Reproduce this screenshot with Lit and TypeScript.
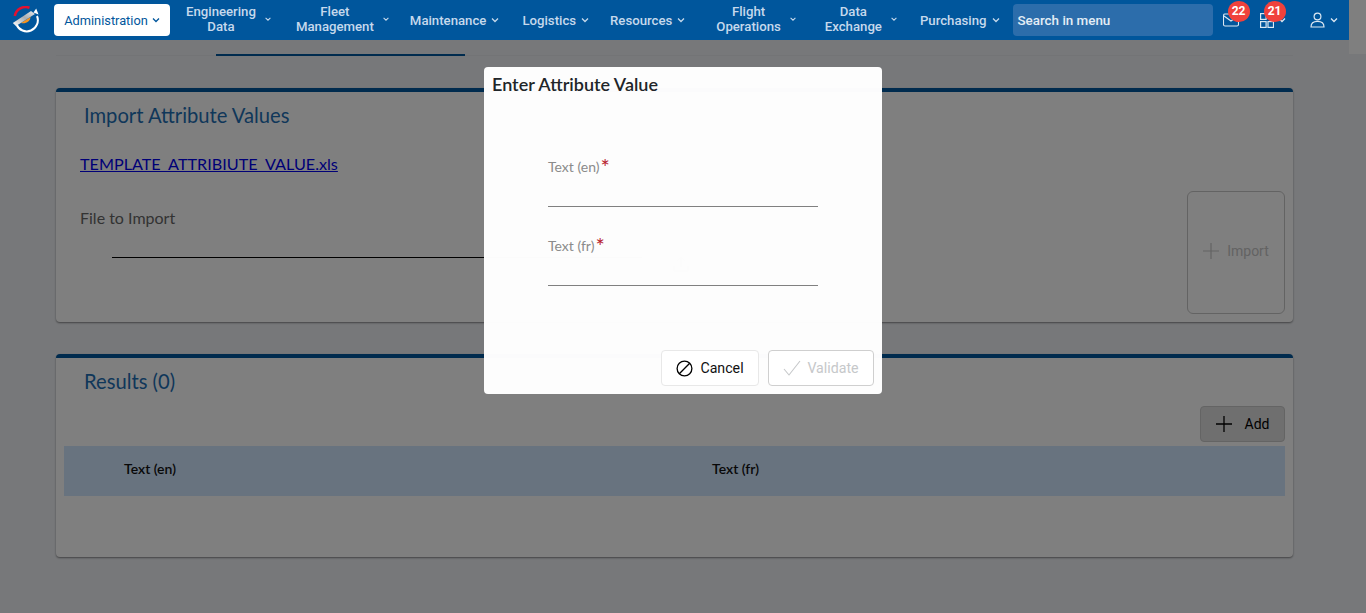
import { LitElement, html, css, svg } from "lit";
import { customElement } from "lit/decorators.js";

// gap before each nav entry comes from the original's uneven cell widths
const NAV_ITEMS = [
  { lines: ["Engineering", "Data"], gap: 16 },
  { lines: ["Fleet", "Management"], gap: 24 },
  { lines: ["Maintenance"], gap: 20 },
  { lines: ["Logistics"], gap: 23 },
  { lines: ["Resources"], gap: 21 },
  { lines: ["Flight", "Operations"], gap: 31 },
  { lines: ["Data", "Exchange"], gap: 28 },
  { lines: ["Purchasing"], gap: 22 },
];

const chevron = (cls = "chev") => html`<svg class=${cls} viewBox="0 0 8 6" width="8" height="6">
  <path d="M1 1.5 L4 4.5 L7 1.5" fill="none" stroke="currentColor" stroke-width="1.3" />
</svg>`;

const logo = svg`<svg width="28" height="28" viewBox="0 0 28 28">
  <defs>
    <linearGradient id="band" x1="0" y1="1" x2="1" y2="0">
      <stop offset="0" stop-color="#ffffff" />
      <stop offset="0.55" stop-color="#a9adb1" />
      <stop offset="1" stop-color="#e8eaec" />
    </linearGradient>
  </defs>
  <path d="M3.8 10 A11 11 0 0 1 18.5 1.8" fill="none" stroke="#e4112f" stroke-width="2.6" />
  <path d="M5.5 18.5 A11 11 0 0 0 26 10" fill="none" stroke="#ffffff" stroke-width="2" />
  <path d="M22.5 6.5 L25.2 2.5 L27.5 8.5 Z" fill="#ffffff" />
  <path d="M10 17 L19.5 11 C19.5 15 14.5 18.5 10 17 Z" fill="#f7941d" />
  <path d="M1.8 17 L20 5 L24 8 L5 20 Z" fill="url(#band)" />
</svg>`;

@customElement("app-root")
export class AppRoot extends LitElement {
  static styles = css`
    :host {
      display: block;
      position: relative;
      height: 613px;
      overflow: hidden;
      background: #eff1f5;
      font-family: Lato, "Liberation Sans", sans-serif;
      color: #333;
    }

    .topbar {
      position: relative;
      z-index: 2;
      width: 1349px;
      height: 40px;
      display: flex;
      align-items: center;
      background: #00569c;
      font-family: Roboto, "Liberation Sans", sans-serif;
      font-size: 13.2px;
      font-weight: 500;
      color: #c6d9ec;
    }

    .logo {
      width: 54px;
      height: 40px;
      flex: none;
      display: flex;
      align-items: center;
      justify-content: center;
      padding-right: 5px;
      box-sizing: border-box;
    }

    .active {
      width: 116px;
      height: 32px;
      flex: none;
      display: flex;
      align-items: center;
      justify-content: center;
      gap: 4px;
      background: #fff;
      border-radius: 4px;
      color: #00569c;
      font-size: 12.8px;
      font-weight: 400;
    }

    .nav-item {
      display: flex;
      align-items: center;
      gap: 5px;
      flex: none;
    }

    .nav-label {
      text-align: center;
      line-height: 15px;
    }

    .nav-label.two-line {
      margin-bottom: 2px;
    }

    .chev { flex: none; }

    .chev.small {
      margin-left: 3px;
      transform: translateY(-1px) scale(0.8);
    }

    .search {
      width: 200px;
      height: 32px;
      margin-left: 13px;
      padding-left: 5px;
      box-sizing: border-box;
      flex: none;
      display: flex;
      align-items: center;
      background: #2c6dab;
      border-radius: 4px;
      color: #e4edf6;
      font-size: 13.4px;
    }

    .tool {
      position: relative;
      flex: none;
      display: flex;
      align-items: center;
      color: #dbe7f2;
    }

    .badge {
      position: absolute;
      top: -12px;
      left: 5px;
      width: 22px;
      height: 21px;
      border-radius: 50%;
      background: #f0413c;
      color: #fff;
      font-size: 12px;
      font-weight: 700;
      line-height: 21px;
      text-align: center;
    }

    .badge.grid { left: 4px; }

    .strip {
      position: absolute;
      top: 0;
      right: 0;
      width: 17px;
      height: 54px;
      background: #fff;
    }

    .content {
      padding: 0 73px 0 56px;
    }

    .tabs {
      height: 15px;
      border-bottom: 1px solid #e6e8ec;
      margin-bottom: 32px;
    }

    .tab-mark {
      width: 249px;
      height: 2px;
      margin-left: 160px;
      position: relative;
      top: 14px;
      background: #00569c;
    }

    .card {
      background: #fff;
      border-top: 4px solid #00569c;
      border-radius: 4px;
      box-shadow: 0 1px 2px rgba(0, 0, 0, 0.45);
      box-sizing: border-box;
    }

    .card-title {
      margin: 0;
      padding-left: 28px;
      font-size: 20.2px;
      font-weight: 400;
      line-height: 26px;
      color: #1f6fb4;
    }

    .import-card {
      height: 234px;
      margin-bottom: 32px;
      padding-top: 10px;
    }

    .import-body {
      display: flex;
      justify-content: space-between;
      padding: 0 8px 0 24px;
    }

    .template {
      display: block;
      margin-top: 26px;
      font-size: 16.2px;
      line-height: 20px;
      color: #0000ee;
      text-decoration: underline;
    }

    .file-label {
      margin-top: 34px;
      font-size: 16px;
      line-height: 20px;
      color: #666;
    }

    .file-row {
      width: 530px;
      height: 29px;
      margin-left: 32px;
      display: flex;
      justify-content: flex-end;
      align-items: flex-end;
      border-bottom: 1px solid #000;
    }

    .upload {
      flex: none;
      width: 16px;
      height: 16px;
      margin-right: -47px;
      margin-bottom: -15px;
      color: #888;
    }

    .import-btn {
      width: 98px;
      height: 123px;
      margin-top: 63px;
      padding: 0 0 3px;
      box-sizing: border-box;
      display: flex;
      align-items: center;
      justify-content: center;
      gap: 8px;
      border: 1px solid #c6c6c6;
      border-radius: 6px;
      background: transparent;
      font-family: Roboto, "Liberation Sans", sans-serif;
      font-size: 14px;
      font-weight: 400;
      color: #c6c6c6;
    }

    .results-card {
      height: 203px;
      padding-top: 10px;
    }

    .results-tools {
      display: flex;
      justify-content: flex-end;
      padding: 0 8px;
      margin-top: 12px;
    }

    .add-btn {
      width: 85px;
      height: 36px;
      box-sizing: border-box;
      display: flex;
      align-items: center;
      justify-content: center;
      gap: 13px;
      border: 1px solid #c8c8c8;
      border-radius: 4px;
      background: #dedede;
      font-family: Roboto, "Liberation Sans", sans-serif;
      font-size: 14px;
      font-weight: 400;
      color: #000;
    }

    .thead {
      display: grid;
      grid-template-columns: 588px 1fr;
      align-items: center;
      height: 50px;
      margin: 4px 8px 0;
      padding: 0 0 6px 60px;
      box-sizing: border-box;
      background: #d1e6ff;
      font-size: 14px;
      font-weight: 600;
      color: #111;
    }

    .scrim {
      position: absolute;
      inset: 0;
      z-index: 1;
      background: rgba(0, 0, 0, 0.5);
    }

    .modal {
      position: absolute;
      z-index: 3;
      left: 484px;
      top: 67px;
      width: 398px;
      height: 327px;
      box-sizing: border-box;
      display: flex;
      flex-direction: column;
      background: rgba(255, 255, 255, 0.985);
      border-radius: 4px;
    }

    .modal-title {
      margin: 0;
      padding: 6px 8px 0;
      font-size: 18px;
      font-weight: 600;
      line-height: 22px;
      color: #212529;
    }

    .modal-form {
      flex: 1;
      padding: 62px 64px 0;
    }

    .field {
      height: 79px;
    }

    .field-label {
      height: 20px;
      display: flex;
      gap: 1px;
      font-size: 14px;
      line-height: 20px;
      color: #8b8b8b;
    }

    .field-label b {
      font-weight: 400;
      font-size: 22px;
      line-height: 20px;
      color: #b8232f;
    }

    .field-line {
      height: 29px;
      border-bottom: 1px solid #808080;
    }

    .modal-actions {
      display: flex;
      justify-content: flex-end;
      gap: 9px;
      padding: 0 8px 8px;
    }

    .btn {
      height: 36px;
      box-sizing: border-box;
      display: flex;
      align-items: center;
      justify-content: center;
      gap: 7px;
      background: #fff;
      border: 1px solid #e8e8e8;
      border-radius: 4px;
      font-family: Roboto, "Liberation Sans", sans-serif;
      font-size: 14.2px;
      font-weight: 400;
      color: #111;
    }

    .btn.cancel { width: 98px; }

    .btn.validate {
      width: 106px;
      gap: 6px;
      border-color: #cfcfcf;
      color: #c6c8ca;
    }
  `;

  render() {
    return html`
      <div class="strip"></div>
      <header class="topbar">
        <div class="logo">${logo}</div>
        <div class="active">Administration ${chevron()}</div>
        ${NAV_ITEMS.map(
          (item) => html`<div class="nav-item" style="margin-left:${item.gap}px">
            <div class="nav-label ${item.lines.length > 1 ? "two-line" : ""}">
              ${item.lines.map((l) => html`<div>${l}</div>`)}
            </div>
            ${chevron(item.lines.length > 1 ? "chev small" : "chev")}
          </div>`
        )}
        <div class="search">Search in menu</div>
        <div class="tool" style="margin-left:10px">
          <svg width="16" height="14" viewBox="0 0 16 14" fill="none" stroke="currentColor" stroke-width="1.1">
            <rect x="0.5" y="1" width="15" height="12" rx="1.5" />
            <path d="M1 3 L8 8 L15 3" />
          </svg>
          <span class="badge">22</span>
        </div>
        <div class="tool" style="margin-left:21px">
          <svg width="14" height="15" viewBox="0 0 14 15" fill="none" stroke="currentColor" stroke-width="1.2">
            <rect x="0.6" y="0.6" width="5.5" height="5.8" />
            <rect x="0.6" y="8.6" width="5.5" height="5.8" />
            <rect x="8" y="8.6" width="5.5" height="5.8" />
          </svg>
          <span style="margin-left:4px;display:flex">${chevron()}</span>
          <span class="badge grid">21</span>
        </div>
        <div class="tool" style="margin-left:24px;gap:5px">
          <svg width="15" height="16" viewBox="0 0 15 16" fill="none" stroke="currentColor" stroke-width="1.2">
            <circle cx="7.5" cy="4.5" r="3.4" />
            <path d="M1 15 C1 10 4 9.4 7.5 9.4 C11 9.4 14 10 14 15 Z" />
          </svg>
          ${chevron()}
        </div>
      </header>

      <main class="content">
        <div class="tabs"><div class="tab-mark"></div></div>

        <section class="card import-card">
          <h2 class="card-title">Import Attribute Values</h2>
          <div class="import-body">
            <div>
              <a class="template">TEMPLATE_ATTRIBIUTE_VALUE.xls</a>
              <div class="file-label">File to Import</div>
              <div class="file-row">
                <svg class="upload" viewBox="0 0 16 16" fill="none" stroke="currentColor" stroke-width="1">
                  <path d="M8 11 V1 M4.5 4.5 L8 1 L11.5 4.5 M1 10 V15 H15 V10" />
                </svg>
              </div>
            </div>
            <button class="import-btn">
              <svg width="16" height="16" viewBox="0 0 16 16" stroke="currentColor" stroke-width="1.2">
                <path d="M8 0 V16 M0 8 H16" />
              </svg>
              Import
            </button>
          </div>
        </section>

        <section class="card results-card">
          <h2 class="card-title">Results (0)</h2>
          <div class="results-tools">
            <button class="add-btn">
              <svg width="16" height="16" viewBox="0 0 16 16" stroke="currentColor" stroke-width="1.3">
                <path d="M8 0 V16 M0 8 H16" />
              </svg>
              Add
            </button>
          </div>
          <div class="thead">
            <div>Text (en)</div>
            <div>Text (fr)</div>
          </div>
        </section>
      </main>

      <div class="scrim"></div>

      <div class="modal">
        <h3 class="modal-title">Enter Attribute Value</h3>
        <div class="modal-form">
          <div class="field">
            <div class="field-label">Text (en) <b>*</b></div>
            <div class="field-line"></div>
          </div>
          <div class="field">
            <div class="field-label">Text (fr) <b>*</b></div>
            <div class="field-line"></div>
          </div>
        </div>
        <div class="modal-actions">
          <button class="btn cancel">
            <svg width="17" height="17" viewBox="0 0 17 17" fill="none" stroke="#000" stroke-width="1.3">
              <circle cx="8.5" cy="8.5" r="7.4" />
              <path d="M3.3 13.7 L13.7 3.3" />
            </svg>
            Cancel
          </button>
          <button class="btn validate" disabled>
            <svg width="18" height="16" viewBox="0 0 18 16" fill="none" stroke="#c6c8ca" stroke-width="1.1">
              <path d="M1 9 L6 15 L17 1" />
            </svg>
            Validate
          </button>
        </div>
      </div>
    `;
  }
}
